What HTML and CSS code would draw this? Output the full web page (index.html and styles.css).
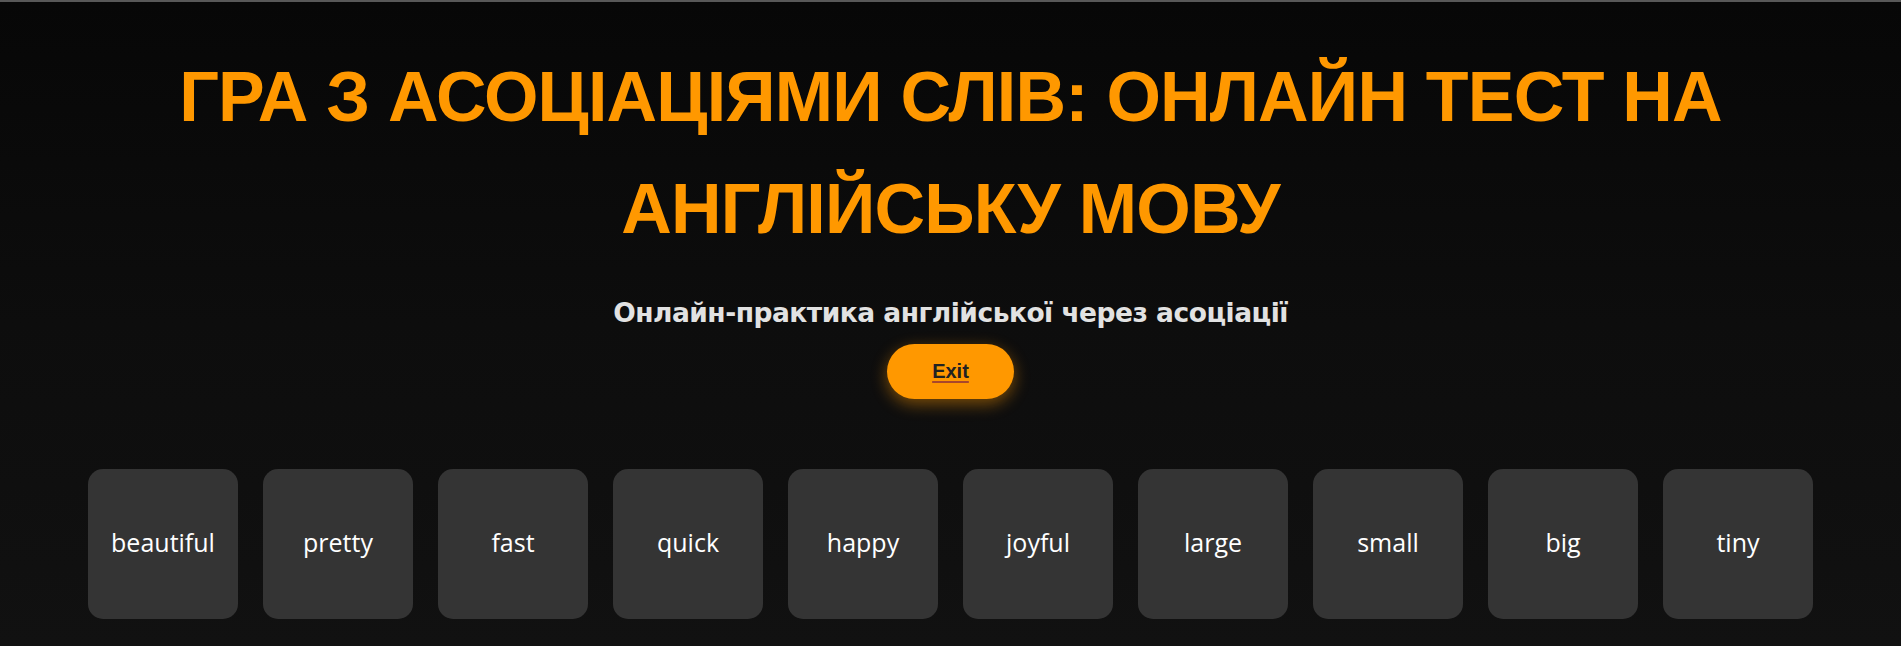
FILE: index.html
```html
<!DOCTYPE html>
<html lang="uk">
<head>
<meta charset="utf-8">
<title>Гра з асоціаціями слів</title>
<link rel="stylesheet" href="styles.css">
</head>
<body>
<div class="page">
  <header class="hero">
    <h1 class="title">ГРА З АСОЦІАЦІЯМИ СЛІВ: ОНЛАЙН ТЕСТ НА АНГЛІЙСЬКУ МОВУ</h1>
    <p class="subtitle">Онлайн-практика англійської через асоціації</p>
    <a class="exit-btn" href="#">Exit</a>
  </header>
  <main class="cards">
    <div class="card">beautiful</div>
    <div class="card">pretty</div>
    <div class="card">fast</div>
    <div class="card">quick</div>
    <div class="card">happy</div>
    <div class="card">joyful</div>
    <div class="card">large</div>
    <div class="card">small</div>
    <div class="card">big</div>
    <div class="card">tiny</div>
  </main>
</div>
</body>
</html>
```

FILE: styles.css
```css
html, body {
  margin: 0;
  padding: 0;
}
body {
  background: #0f0f0f;
  min-height: 646px;
}
.page {
  border-top: 2px solid #585858;
  min-height: 644px;
  background: linear-gradient(180deg, #070707 0%, #0d0d0d 50%, #111111 100%);
  display: flex;
  flex-direction: column;
  align-items: center;
}
.hero {
  display: flex;
  flex-direction: column;
  align-items: center;
  padding-top: 39px;
}
.title {
  margin: 0;
  width: 1600px;
  text-align: center;
  font-family: "Liberation Sans", Arial, sans-serif;
  font-weight: 700;
  font-size: 70px;
  line-height: 112px;
  letter-spacing: -0.8px;
  color: #ff9800;
}
.subtitle {
  margin: 31px 0 0;
  font-family: "DejaVu Sans", sans-serif;
  font-weight: 700;
  font-size: 26.5px;
  line-height: 34px;
  letter-spacing: -0.5px;
  color: #e2e2e2;
}
.exit-btn {
  margin-top: 14px;
  display: inline-flex;
  align-items: center;
  justify-content: center;
  width: 127px;
  height: 55px;
  box-sizing: border-box;
  border-radius: 28px;
  background: #ff9800;
  color: #222;
  text-decoration: underline;
  text-decoration-color: #a8472c;
  text-decoration-thickness: 2px;
  text-underline-offset: 3px;
  font-family: "Liberation Sans", Arial, sans-serif;
  font-weight: 700;
  font-size: 20px;
  box-shadow: 0 5px 16px rgba(255, 152, 0, 0.45);
}
.cards {
  margin-top: 70px;
  display: flex;
  gap: 25px;
}
.card {
  width: 150px;
  height: 150px;
  border-radius: 15px;
  background: #343434;
  display: flex;
  align-items: center;
  justify-content: center;
  padding-bottom: 4px;
  box-sizing: border-box;
  color: #ffffff;
  font-family: "Open Sans", sans-serif;
  font-size: 25px;
}
```
